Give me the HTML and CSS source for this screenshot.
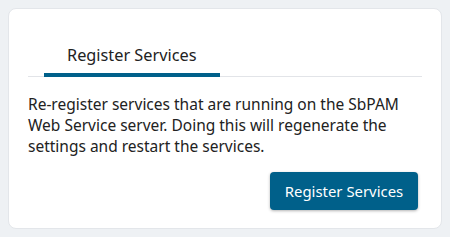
FILE: index.html
```html
<!DOCTYPE html>
<html lang="en">
<head>
  <meta charset="UTF-8" />
  <title>Register Services</title>
  <link rel="stylesheet" href="styles.css">
</head>
<body>
  <div class="card">
    <div class="tabs">
      <div class="tab active">Register Services</div>
    </div>
    <p class="desc">
      Re-register services that are running on the SbPAM Web Service server. Doing this will regenerate the settings and restart the services.
    </p>
    <div class="actions">
      <button class="btn-primary">Register Services</button>
    </div>
  </div>
</body>
</html>
```

FILE: styles.css
```css
body {
  margin: 0;
  padding: 8px;
  background: #eef1f4;
  font-family: "Noto Sans", "Open Sans", sans-serif;
  color: #222;
}

.card {
  background: #fff;
  border: 1px solid #e3e6ea;
  border-radius: 8px;
  height: 221px;
  box-sizing: border-box;
  padding: 36px 19px 0 19px;
}

.tabs {
  display: flex;
  border-bottom: 1px solid #e2e4e8;
}

.tab {
  padding: 0 24px 8px 23px;
  margin-left: 16px;
  font-size: 16.3px;
  line-height: 20px;
  color: #222;
}

.tab.active {
  border-bottom: 4px solid #00608a;
  margin-bottom: -1px;
}

.desc {
  margin: 17px 0 0 0;
  padding-right: 20px;
  font-size: 15.5px;
  line-height: 21px;
}

.actions {
  display: flex;
  justify-content: flex-end;
  margin-top: 15px;
  padding-right: 4px;
}

.btn-primary {
  background: #00608a;
  color: #fff;
  border: none;
  border-radius: 4px;
  font-family: inherit;
  font-size: 14.9px;
  padding: 0;
  width: 148px;
  height: 38px;
  box-shadow: 0 1px 3px rgba(0, 0, 0, 0.3);
}
```
